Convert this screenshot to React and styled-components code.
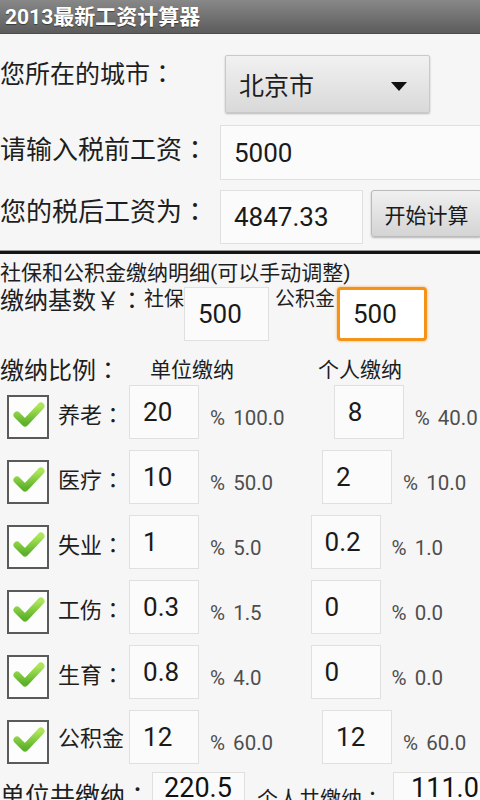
import React from "react";
import styled, { createGlobalStyle } from "styled-components";

const Global = createGlobalStyle`
  html, body { margin: 0; padding: 0; background: #f6f6f6; }
  * { box-sizing: border-box; }
`;

const Page = styled.div`
  width: 480px;
  height: 800px;
  overflow: hidden;
  background: #f6f6f6;
  font-family: Roboto, "Noto Sans CJK SC", sans-serif;
  color: #1e1e1e;
`;

const Colon = styled.span`
  font-family: "Noto Sans CJK TC", "Noto Sans CJK SC", sans-serif;
`;

const TitleBar = styled.div`
  height: 34px;
  background: linear-gradient(#888888, #5c5c5c);
  color: #fff;
  font-size: 21px;
  font-weight: 700;
  line-height: 34px;
  padding-left: 5px;
  text-shadow: 0 1px 1px rgba(0, 0, 0, 0.45);
  border-bottom: 1px solid #4c4c4c;
`;

const FormRow = styled.div`
  display: flex;
  align-items: flex-start;
  margin-top: ${(p) => p.$mt}px;
`;

const FormLabel = styled.div`
  flex: 0 0 ${(p) => p.$w}px;
  font-size: ${(p) => p.$fs}px;
  line-height: ${(p) => p.$lh}px;
  white-space: nowrap;
`;

const Spinner = styled.div`
  width: 205px;
  height: 58px;
  display: flex;
  align-items: center;
  justify-content: space-between;
  padding: 0 22px 0 13px;
  border: 1px solid #c9c9c9;
  border-radius: 2px;
  background: linear-gradient(#f1f1f1, #d9d9d9);
  box-shadow: 0 1px 2px rgba(0, 0, 0, 0.25);
  font-size: 25px;
`;

const Arrow = styled.span`
  width: 0;
  height: 0;
  border-left: 8px solid transparent;
  border-right: 8px solid transparent;
  border-top: 9px solid #111;
  margin-top: 4px;
`;

const Field = styled.div`
  flex: 0 0 auto;
  width: ${(p) => p.$w}px;
  height: ${(p) => p.$h || 54}px;
  margin-left: ${(p) => p.$ml || 0}px;
  padding-left: ${(p) => p.$pl || 13}px;
  display: flex;
  align-items: center;
  background: #fbfbfb;
  border: 1px solid #e0e0e0;
  font-size: 26px;
  color: #1a1a1a;
  white-space: nowrap;
`;

const FocusField = styled(Field)`
  border: 3px solid #f39419;
  border-radius: 4px;
  box-shadow: 0 0 3px #f7ac55;
  background: #fff;
`;

const Button = styled.div`
  flex: 0 0 auto;
  width: 111px;
  height: 47px;
  margin-left: 8px;
  display: flex;
  align-items: center;
  justify-content: center;
  border: 1px solid #bababa;
  border-radius: 3px;
  background: linear-gradient(#f0f0f0, #d4d4d4);
  box-shadow: 0 1px 2px rgba(0, 0, 0, 0.25);
  font-size: 21px;
  color: #1a1a1a;
`;

const Divider = styled.div`
  margin-top: 7px;
  height: 3px;
  background: #141414;
  box-shadow: 0 -1px 0 #9a9a9a;
`;

const SectionTitle = styled.div`
  margin-top: 6px;
  font-size: 21px;
  line-height: 26px;
  white-space: nowrap;
`;

const Text = styled.span`
  flex: 0 0 auto;
  font-size: ${(p) => p.$fs}px;
  line-height: ${(p) => p.$lh || 24}px;
  margin-left: ${(p) => p.$ml || 0}px;
  padding-top: ${(p) => p.$pt || 0}px;
  width: ${(p) => (p.$w ? `${p.$w}px` : "auto")};
  white-space: nowrap;
`;

const RatioHead = styled.div`
  display: flex;
  align-items: center;
  margin-top: 14px;
  height: 30px;
`;

const RatioRow = styled.div`
  display: flex;
  align-items: center;
  height: 54px;
  margin-top: ${(p) => (p.$first ? 0 : 11)}px;
  overflow: hidden;
`;

const CheckBox = styled.div`
  flex: 0 0 auto;
  align-self: flex-end;
  width: 42px;
  height: 44px;
  margin-left: 7px;
  border: 2px solid #5a5a5a;
  background: #fdfdfd;
`;

const ItemLabel = styled.div`
  flex: 0 0 66px;
  margin-left: 9px;
  font-size: 22px;
  line-height: 26px;
  padding-top: 4px;
  white-space: nowrap;
`;

const Pct = styled.span`
  flex: 0 0 auto;
  margin-left: 11px;
  padding-top: 12px;
  font-size: 20.5px;
  color: #4e4e4e;
  word-spacing: 3px;
  white-space: nowrap;
`;

const TotalRow = styled.div`
  display: flex;
  align-items: flex-start;
  margin-top: 8px;
  height: 54px;
  overflow: hidden;
`;

const TotalField = styled(Field)`
  align-items: flex-start;
  line-height: 30px;
  font-size: 27px;
  color: #111;
`;

const Check = () => (
  <svg width="38" height="40" viewBox="0 0 38 40">
    <defs>
      <linearGradient id="ck" x1="0" y1="0" x2="0" y2="1">
        <stop offset="0" stopColor="#aee65a" />
        <stop offset="1" stopColor="#5db22b" />
      </linearGradient>
    </defs>
    <path
      d="M8 18 L16 26 L32 9"
      stroke="url(#ck)"
      strokeWidth="7"
      fill="none"
      strokeLinecap="round"
      strokeLinejoin="round"
    />
  </svg>
);

const rows = [
  { name: "养老", colon: true, a: "20", ap: "% 100.0", b: "8", bp: "% 40.0" },
  { name: "医疗", colon: true, a: "10", ap: "% 50.0", b: "2", bp: "% 10.0" },
  { name: "失业", colon: true, a: "1", ap: "% 5.0", b: "0.2", bp: "% 1.0" },
  { name: "工伤", colon: true, a: "0.3", ap: "% 1.5", b: "0", bp: "% 0.0" },
  { name: "生育", colon: true, a: "0.8", ap: "% 4.0", b: "0", bp: "% 0.0" },
  { name: "公积金", colon: false, a: "12", ap: "% 60.0", b: "12", bp: "% 60.0" },
];

export default function App() {
  return (
    <Page>
      <Global />
      <TitleBar>2013最新工资计算器</TitleBar>

      <FormRow $mt={21}>
        <FormLabel $w={225} $fs={25} $lh={34}>
          您所在的城市<Colon>：</Colon>
        </FormLabel>
        <Spinner>
          <span>北京市</span>
          <Arrow />
        </Spinner>
      </FormRow>

      <FormRow $mt={12}>
        <FormLabel $w={220} $fs={26} $lh={46}>
          请输入税前工资<Colon>：</Colon>
        </FormLabel>
        <Field $w={262} $h={55}>5000</Field>
      </FormRow>

      <FormRow $mt={10}>
        <FormLabel $w={220} $fs={26} $lh={40}>
          您的税后工资为<Colon>：</Colon>
        </FormLabel>
        <Field $w={143}>4847.33</Field>
        <Button>开始计算</Button>
      </FormRow>

      <Divider />

      <SectionTitle>社保和公积金缴纳明细(可以手动调整)</SectionTitle>

      <FormRow $mt={1}>
        <Text $fs={24}>
          缴纳基数￥<Colon>：</Colon>
        </Text>
        <Text $fs={20}>社保</Text>
        <Field $w={85}>500</Field>
        <Text $fs={20} $ml={6}>公积金</Text>
        <FocusField $w={90} $ml={2}>500</FocusField>
      </FormRow>

      <RatioHead>
        <Text $fs={24} $lh={30} $w={150}>
          缴纳比例<Colon>：</Colon>
        </Text>
        <Text $fs={21} $lh={30}>单位缴纳</Text>
        <Text $fs={21} $lh={30} $ml={84}>个人缴纳</Text>
      </RatioHead>

      {rows.map((r, i) => (
        <RatioRow key={r.name} $first={i === 0}>
          <CheckBox>
            <Check />
          </CheckBox>
          <ItemLabel>
            {r.name}
            {r.colon && <Colon>：</Colon>}
          </ItemLabel>
          <Field $w={70} $ml={5}>{r.a}</Field>
          <Pct>{r.ap}</Pct>
          <Field $w={70} $ml={49}>{r.b}</Field>
          <Pct>{r.bp}</Pct>
        </RatioRow>
      ))}

      <TotalRow>
        <Text $fs={25} $lh={30} $pt={7}>
          单位共缴纳<Colon>：</Colon>
        </Text>
        <TotalField $w={93} $ml={2} $pl={11}>220.5</TotalField>
        <Text $fs={21} $lh={30} $pt={10} $ml={12}>
          个人共缴纳<Colon>：</Colon>
        </Text>
        <TotalField $w={100} $ml={10} $pl={17}>111.0</TotalField>
      </TotalRow>
    </Page>
  );
}
